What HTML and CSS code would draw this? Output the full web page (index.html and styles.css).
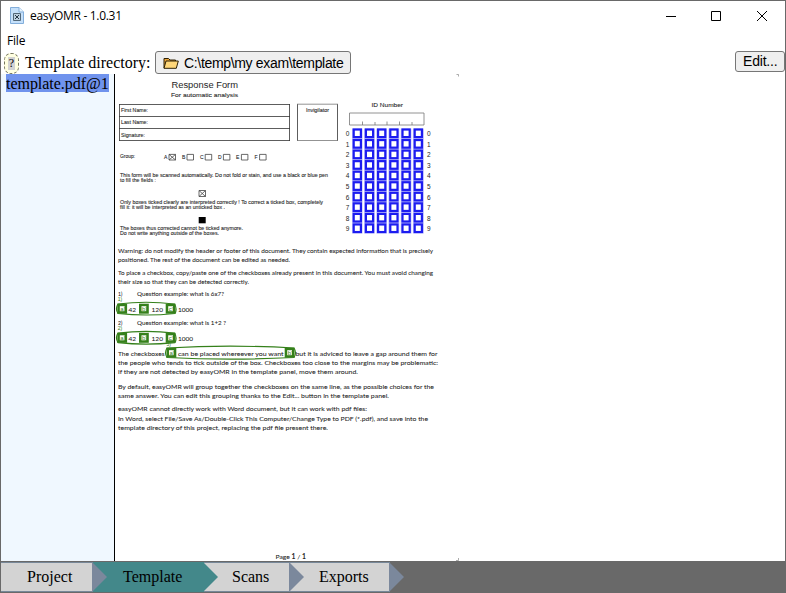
FILE: index.html
```
<!DOCTYPE html>
<html lang="en">
<head>
<meta charset="utf-8">
<title>easyOMR - 1.0.31</title>
<link rel="stylesheet" href="styles.css">
</head>
<body>
<div class="window">
  <header class="titlebar">
    <svg class="app-icon" width="14" height="17" viewBox="0 0 14 17"><path d="M.5.5H9L13.5 5V16.500H.5Z" fill="#c5e0fa" stroke="#83aedb"/><path d="M9 .5V5h4.500" fill="#e9f5ff" stroke="#83aedb"/><path d="M3.500 6.500h7v7h-7Z" fill="#bdd0e0" stroke="#536878"/><path d="M5 8l4 4M9 8l-4 4" stroke="#263746"/></svg>
    <span class="title">easyOMR - 1.0.31</span>
    <svg class="controls" width="104" height="12" viewBox="0 0 104 12" fill="none" stroke="#000"><path d="M1 6.500h10M46.500 1.500h9v9h-9ZM92 1l10 10M102 1l-10 10"/></svg>
  </header>
  <nav class="menubar">File</nav>
  <div class="toolbar">
    <span class="help"><span class="help-mark">?</span></span>
    <span class="label">Template directory:</span>
    <button class="btn path"><svg width="16" height="12" viewBox="0 0 16 12"><path d="M1 11V1.500h4.500L7 3h5.500v2" fill="#e8a33a" stroke="#2c2005"/><path d="M1 11.300L3 4h12.300L13.300 11.300Z" fill="#ffd779" stroke="#2c2005"/></svg><span>C:\temp\my exam\template</span></button>
    <button class="btn edit">Edit...</button>
  </div>
  <main class="content">
    <aside class="files"><div class="file">template.pdf@1</div></aside>
    <section class="preview">
      <svg class="page" width="344" height="487" viewBox="115 74 344 487">
        <defs>
          <rect id="c" width="7.200" height="7.600" x="1" y="1"/>
          <g id="r"><use href="#c" x="352.700"/><use href="#c" x="364.900"/><use href="#c" x="377.100"/><use href="#c" x="389.300"/><use href="#c" x="401.500"/><use href="#c" x="413.700"/></g>
          <g id="m"><rect x="1.250" y="1.250" width="7.300" height="7.500" fill="#fff" stroke="#35801b" stroke-width="2.500"/></g>
        </defs>
        <g class="form">
          <text class="h1" x="171.500" y="87.500" textLength="66.500" lengthAdjust="spacingAndGlyphs">Response Form</text>
          <text class="h2" x="171" y="96.700" textLength="67" lengthAdjust="spacingAndGlyphs">For automatic analysis</text>
          <g class="lines"><path d="M119.500 104v37M289.500 104v37M119 104.500h171M119 116.500h171M119 128.500h171M119 140.500h171M297.500 104v37M337.500 104v37"/><path class="pale" d="M297 104.200h41M297 140.500h41M349.500 113h74.500v12h-74.500ZM362.500 121.500v3.500M375 122v3M387 121.500v3.500M399.500 121.500v3.500M412 122v3"/></g>
          <text x="121" y="112" textLength="27" lengthAdjust="spacingAndGlyphs">First Name:</text>
          <text x="121" y="124.300" textLength="27" lengthAdjust="spacingAndGlyphs">Last Name:</text>
          <text x="121" y="136.500" textLength="24" lengthAdjust="spacingAndGlyphs">Signature:</text>
          <text x="306" y="112" textLength="23" lengthAdjust="spacingAndGlyphs">Invigilator</text>
          <text class="h2" x="371.500" y="107" textLength="31.500" lengthAdjust="spacingAndGlyphs">ID Number</text>
          <text x="120" y="158" textLength="15" lengthAdjust="spacingAndGlyphs">Group:</text>
          <text x="164" y="159.200">A</text><text x="182" y="159.200">B</text><text x="200" y="159.200">C</text><text x="218" y="159.200">D</text><text x="236" y="159.200">E</text><text x="254.500" y="159.200">F</text>
          <path class="boxes" d="M169 154.400h6.500v5.600h-6.500ZM187 154.400h6.500v5.600h-6.500ZM205.200 154.400h6.500v5.600h-6.500ZM223.400 154.400h6.500v5.600h-6.500ZM241.400 154.400h6.500v5.600h-6.500ZM259.600 154.400h6.500v5.600h-6.500ZM169 154.400l6.500 5.600M175.500 154.400l-6.500 5.600M199 190.500h6.500v6h-6.500ZM199 190.500l6.500 6M205.500 190.500l-6.500 6"/>
          <text x="120" y="177" textLength="208" lengthAdjust="spacingAndGlyphs">This form will be scanned automatically. Do not fold or stain, and use a black or blue pen</text>
          <text x="120" y="182.300" textLength="36" lengthAdjust="spacingAndGlyphs">to fill the fields :</text>
          <text x="120" y="203.700" textLength="203" lengthAdjust="spacingAndGlyphs">Only boxes ticked clearly are interpreted correctly ! To correct a ticked box, completely</text>
          <text x="120" y="209" textLength="105" lengthAdjust="spacingAndGlyphs">fill it: it will be interpreted as an unticked box .</text>
          <rect x="198.700" y="217" width="7" height="6.300"/>
          <text x="120" y="230" textLength="123" lengthAdjust="spacingAndGlyphs">The boxes thus corrected cannot be ticked anymore.</text>
          <text x="120" y="235.300" textLength="99" lengthAdjust="spacingAndGlyphs">Do not write anything outside of the boxes.</text>
        </g>
        <rect x="352" y="128.500" width="72" height="105" fill="#c4c4fc"/>
        <path d="M363.300 128v106M375.500 128v106M387.700 128v106M400 128v106M412.200 128v106" stroke="#fff" stroke-width="1.400"/>
        <g class="grid">
          <use href="#r" y="128.500"/><use href="#r" y="139.050"/><use href="#r" y="149.600"/><use href="#r" y="160.150"/><use href="#r" y="170.700"/><use href="#r" y="181.250"/><use href="#r" y="191.800"/><use href="#r" y="202.350"/><use href="#r" y="212.900"/><use href="#r" y="223.450"/>
        </g>
        <g class="digits">
          <text x="345.800" y="136.200">0</text><text x="427" y="136.200">0</text>
          <text x="345.800" y="146.700">1</text><text x="427" y="146.700">1</text>
          <text x="345.800" y="157.300">2</text><text x="427" y="157.300">2</text>
          <text x="345.800" y="167.800">3</text><text x="427" y="167.800">3</text>
          <text x="345.800" y="178.400">4</text><text x="427" y="178.400">4</text>
          <text x="345.800" y="188.900">5</text><text x="427" y="188.900">5</text>
          <text x="345.800" y="199.500">6</text><text x="427" y="199.500">6</text>
          <text x="345.800" y="210">7</text><text x="427" y="210">7</text>
          <text x="345.800" y="220.600">8</text><text x="427" y="220.600">8</text>
          <text x="345.800" y="231.200">9</text><text x="427" y="231.200">9</text>
        </g>
        <g class="prose">
          <text x="118" y="253.300" textLength="315" lengthAdjust="spacingAndGlyphs">Warning: do not modify the header or footer of this document. They contain expected information that is precisely</text>
          <text x="118" y="261.800" textLength="172" lengthAdjust="spacingAndGlyphs">positioned. The rest of the document can be edited as needed.</text>
          <text x="118" y="275" textLength="315" lengthAdjust="spacingAndGlyphs">To place a checkbox, copy/paste one of the checkboxes already present in this document. You must avoid changing</text>
          <text x="118" y="283.700" textLength="131" lengthAdjust="spacingAndGlyphs">their size so that they can be detected correctly.</text>
          <text class="item" x="118" y="295.800">1)</text><text x="137" y="296.300" textLength="87" lengthAdjust="spacingAndGlyphs">Question example: what is 6x7?</text>
          <text x="128.500" y="311.500" textLength="7.500">42</text><text x="151.500" y="311.500" textLength="11.500">120</text><text x="178" y="311.500" textLength="15">1000</text>
          <text class="item" x="118" y="324.800">2)</text><text x="137" y="325.300" textLength="89" lengthAdjust="spacingAndGlyphs">Question example: what is 1+2 ?</text>
          <text x="128.500" y="340.600" textLength="7.500">42</text><text x="151.500" y="340.600" textLength="11.500">120</text><text x="178" y="340.600" textLength="15">1000</text>
          <text x="118" y="356" textLength="46.500" lengthAdjust="spacingAndGlyphs">The checkboxes</text>
          <text x="178" y="356" textLength="105.500" lengthAdjust="spacingAndGlyphs">can be placed whereever you want</text>
          <text x="295.500" y="356" textLength="142" lengthAdjust="spacingAndGlyphs">but it is adviced to leave a gap around them for</text>
          <text x="118" y="365.200" textLength="320" lengthAdjust="spacingAndGlyphs">the people who tends to tick outside of the box. Checkboxes too close to the margins may be problematic:</text>
          <text x="118" y="374.300" textLength="240" lengthAdjust="spacingAndGlyphs">if they are not detected by easyOMR in the template panel, move them around.</text>
          <text x="118" y="388.500" textLength="316" lengthAdjust="spacingAndGlyphs">By default, easyOMR will group together the checkboxes on the same line, as the possible choices for the</text>
          <text x="118" y="397.500" textLength="271" lengthAdjust="spacingAndGlyphs">same answer. You can edit this grouping thanks to the Edit... button in the template panel.</text>
          <text x="118" y="411.300" textLength="249" lengthAdjust="spacingAndGlyphs">easyOMR cannot directly work with Word document, but it can work with pdf files:</text>
          <text x="118" y="420.700" textLength="310" lengthAdjust="spacingAndGlyphs">In Word, select File/Save As/Double-Click This Computer/Change Type to PDF (*.pdf), and save into the</text>
          <text x="118" y="429.700" textLength="210" lengthAdjust="spacingAndGlyphs">template directory of this project, replacing the pdf file present there.</text>
          <text x="275.500" y="558.700" textLength="30.500" lengthAdjust="spacingAndGlyphs">Page <tspan class="strong">1</tspan> / <tspan class="strong">1</tspan></text>
        </g>
        <g class="marks">
          <use href="#m" x="117.300" y="303.700"/><use href="#m" x="139" y="303.700"/><use href="#m" x="165.700" y="303.700"/>
          <use href="#m" x="117.300" y="332.800"/><use href="#m" x="139" y="332.800"/><use href="#m" x="165.700" y="332.800"/>
          <use href="#m" x="166.500" y="347.700"/><use href="#m" x="284.700" y="347.700"/>
          <path class="loop" d="M118 304Q146 300.500 174.500 304Q177.500 308.700 175 313.500Q146 316.500 118 313.500Q114.800 308.700 118 304ZM118 333.100Q146 329.600 174.500 333.100Q177.500 337.800 175 342.600Q146 345.600 118 342.600Q114.800 337.800 118 333.100ZM167 348Q230 344.300 294 348Q297 352.700 294 357.500Q230 360.700 167 357.500Q164 352.700 167 348Z"/>
          <text x="120.300" y="310.700">a)</text><text x="142" y="310.700">b)</text><text x="168.700" y="310.700">c)</text>
          <text x="120.300" y="339.800">a)</text><text x="142" y="339.800">b)</text><text x="168.700" y="339.800">c)</text>
          <text x="169.500" y="354.700">a)</text><text x="287.700" y="354.700">b)</text>
          <text class="num" x="117.700" y="301.300">1)</text><text class="num" x="117.700" y="330.300">2)</text><text class="num" x="166.500" y="346">3)</text>
        </g>
        <path d="M456.500 74.500h2v2M456 560.500h2.500v-2.500" fill="none" stroke="#888" stroke-width=".7"/>
      </svg>
    </section>
  </main>
  <footer class="steps">
    <div class="step project">Project</div>
    <div class="step template active">Template</div>
    <div class="step scans">Scans</div>
    <div class="step exports">Exports</div>
  </footer>
</div>
</body>
</html>
```

FILE: styles.css
```
* { box-sizing: border-box; }
body { margin: 0; background: #fff; color: #000; font-family: "Liberation Serif", serif; font-size: 16px; }
.window { width: 786px; height: 593px; display: flex; flex-direction: column; border: 1px solid #696969; border-bottom: 0; overflow: hidden; }
.titlebar { height: 29px; display: flex; align-items: center; padding: 0 16px 0 9px; font: 12px "Open Sans", sans-serif; letter-spacing: -.3px; }
.title { margin-left: 6px; }
.controls { margin-left: auto; }
.menubar { height: 20px; padding: 1px 6px; font: 12px/20px "Open Sans", sans-serif; letter-spacing: -.2px; }
.toolbar { height: 24px; display: flex; align-items: flex-start; }
.help { width: 15px; height: 21px; margin: 3px 0 0 3px; border: 1px dashed #77775f; border-radius: 7px; background: #ffffe1; padding: 3px; }
.help-mark { display: block; width: 7px; height: 13px; background: #d3d3d3; font-size: 12px; line-height: 13px; text-align: center; }
.label { width: 125px; margin: 3px 0 0 6px; line-height: 20px; white-space: nowrap; }
.btn { display: flex; align-items: center; height: 23px; border: 1px solid #767676; border-radius: 3px; background: #efefef; padding: 0 7px; color: #000; font: 14px "Liberation Sans", sans-serif; white-space: nowrap; }
.path { width: 196px; gap: 5px; margin-left: 5px; margin-top: 1px; letter-spacing: -.33px; padding-top: 1px; }
.path svg { flex: none; }
.edit { margin-left: auto; height: 21px; margin-top: 1px; width: 50px; letter-spacing: -.2px; padding-bottom: 1px; }
.content { height: 487px; flex: none; display: flex; }
.files { width: 113px; background: #f0f8ff; padding: 0 4px 0 5px; }
.file { height: 18px; width: 103px; background: #7093ed; line-height: 19px; white-space: nowrap; letter-spacing: -.03px; }
.preview { flex: 1; border-left: 1px solid #000; }
.page { display: block; }
.page text { fill: #262626; }
.form text { font: 5px "Liberation Sans", sans-serif; stroke: #333; stroke-width: .1px; }
.form .h1 { font-size: 9.6px; stroke: none; }
.form .h2 { font-size: 6.1px; }
.lines path, .boxes { fill: none; stroke: #333; stroke-width: .8; }
.lines .pale { stroke: #777; }
.boxes { stroke: #444; }
.grid { fill: #fff; stroke: #1c1cf0; stroke-width: 2.2; }
.digits text { font: 6.5px "Liberation Sans", sans-serif; }
.prose text { font: 6.5px Lato, sans-serif; stroke: #262626; stroke-width: .06px; }
.prose .item { font-size: 5px; }
.prose .strong { font-weight: 700; }
.loop { fill: none; stroke: #35801b; stroke-width: 1.1; }
.page .marks text { fill: #35801b; font: 6px "Liberation Sans", sans-serif; }
.page .marks .num { font-size: 5px; }
.steps { flex: 1; display: flex; align-items: flex-start; background: #696969; padding-top: 1px; }
.step { position: relative; height: 30px; background: #d3d3d3; border: 1px solid #778899; border-left: 0; line-height: 28px; }
.step::after { content: ""; position: absolute; z-index: 1; left: 100%; top: -1px; width: 15px; height: 30px; background: #7b889c; clip-path: polygon(0 0, 100% 50%, 0 100%); }
.project { width: 91px; padding-left: 26px; }
.template { width: 111px; padding-left: 30px; }
.scans { width: 86px; padding-left: 28px; }
.exports { width: 100px; padding-left: 29px; }
.step.project { width: 92px; }
.active { background: #43888a; border-color: #43888a; }
.active::after { background: #43888a; }
```
